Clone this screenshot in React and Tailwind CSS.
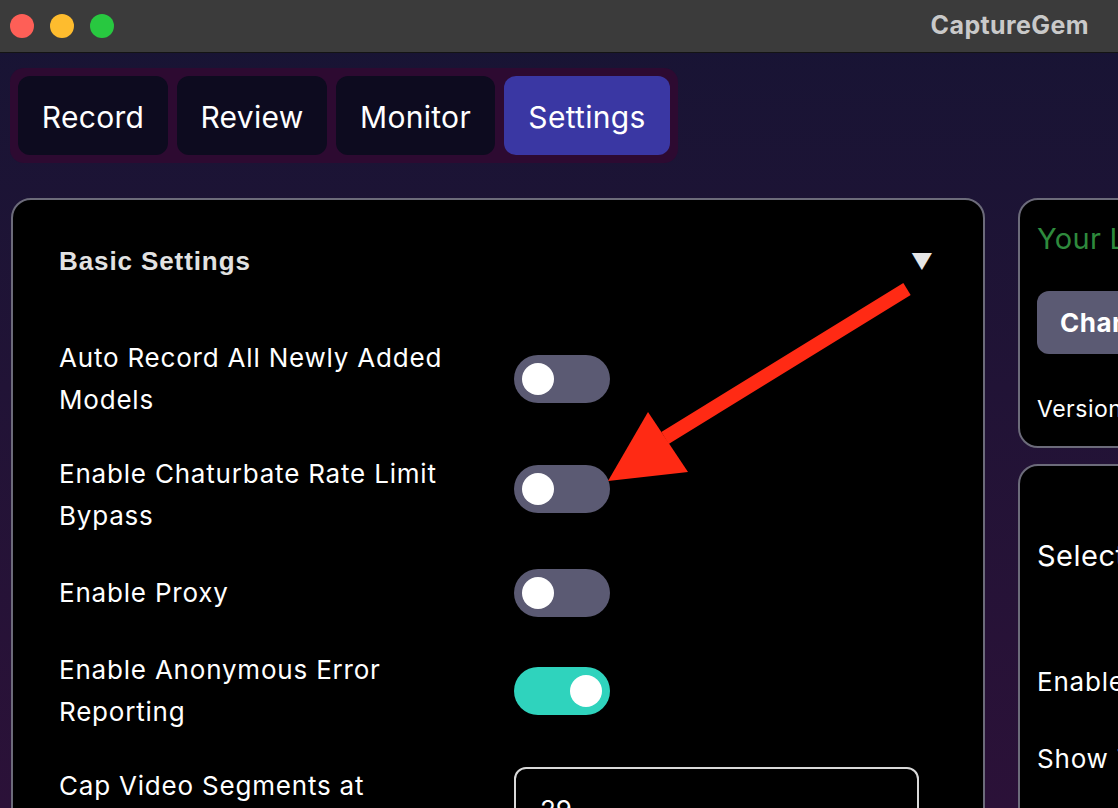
import { useState } from "react";

function Toggle({ on, className = "" }) {
  return (
    <div
      className={`w-[96px] h-[48px] rounded-full flex items-center px-[8px] shrink-0 ${
        on ? "bg-[#2fd3bd] justify-end" : "bg-[#5b5a73] justify-start"
      } ${className}`}
    >
      <div className="w-[32px] h-[32px] rounded-full bg-white" />
    </div>
  );
}

function Row({ label, children }) {
  return (
    <div className="flex items-center">
      <div className="w-[455px] pr-[8px] text-[26px] leading-[42px] tracking-[0.8px] text-white">{label}</div>
      {children}
    </div>
  );
}

export default function App() {
  const [tab] = useState("Settings");
  const tabs = [
    { label: "Record", w: "w-[150px]" },
    { label: "Review", w: "w-[150px]" },
    { label: "Monitor", w: "w-[159px]" },
    { label: "Settings", w: "w-[166px]" },
  ];

  return (
    <div
      className="relative w-[1118px] h-[808px] overflow-hidden flex flex-col bg-gradient-to-b from-[#171434] to-[#2b1138]"
      style={{ fontFamily: "Inter, 'Noto Sans', sans-serif" }}
    >
      {/* Title bar */}
      <div className="h-[53px] shrink-0 bg-[#3b3b3b] border-b border-[#141414] flex items-center px-[10px]">
        <div className="flex gap-[16px]">
          <span className="w-[24px] h-[24px] rounded-full bg-[#fe5f57]" />
          <span className="w-[24px] h-[24px] rounded-full bg-[#febc2e]" />
          <span className="w-[24px] h-[24px] rounded-full bg-[#28c840]" />
        </div>
        <div className="ml-auto mr-[19px] text-[25px] tracking-[0.4px] font-bold text-[#c9c9c9]">CaptureGem</div>
      </div>

      {/* Tabs */}
      <div className="px-[10px] pt-[15px] shrink-0">
        <div className="inline-flex gap-[9px] p-[8px] rounded-[14px] bg-[#2d0a31]">
          {tabs.map((t) => (
            <div
              key={t.label}
              className={`${t.w} h-[79px] rounded-[12px] flex items-center justify-center pt-[4px] text-[30px] tracking-[0.3px] text-white ${
                tab === t.label ? "bg-[#3a37a3]" : "bg-[#0d0b1f]"
              }`}
            >
              {t.label}
            </div>
          ))}
        </div>
      </div>

      {/* Panels */}
      <div className="flex gap-[33px] pl-[11px] pt-[35px] flex-1">
        <div className="w-[974px] shrink-0 h-[700px] rounded-[20px] border-2 border-[#6c6b7a] bg-black pl-[46px] pr-[50px]">
          <div className="flex items-center justify-between h-[124px] pb-[2px]">
            <span
              className="text-[26px] tracking-[0.9px] font-bold text-[#e2e2e2]"
              style={{ fontFamily: "'Liberation Sans', Arial, sans-serif" }}
            >
              Basic Settings
            </span>
            <span className="text-[#e6e6e6] text-[22px]">▼</span>
          </div>
          <div className="flex flex-col gap-[32px] pt-[13px]">
            <Row label={<>Auto Record All Newly Added<br />Models</>}>
              <Toggle on={false} />
            </Row>
            <Row label={<>Enable Chaturbate Rate Limit<br />Bypass</>}>
              <Toggle on={false} className="-mt-[12px]" />
            </Row>
            <Row label="Enable Proxy">
              <Toggle on={false} />
            </Row>
            <Row label={<>Enable Anonymous Error<br />Reporting</>}>
              <Toggle on={true} />
            </Row>
            <div className="flex items-start">
              <div className="w-[455px] pr-[8px] text-[26px] leading-[42px] tracking-[0.8px] text-white">
                Cap Video Segments at<br />Length (minutes)
              </div>
              <div className="w-[405px] h-[84px] mt-[2px] rounded-[12px] border-2 border-[#d9d9d9] bg-black px-[24px] flex items-center text-[26px] text-white">
                29
              </div>
            </div>
          </div>
        </div>

        <div className="w-[300px] shrink-0 flex flex-col gap-[16px]">
          <div className="h-[250px] rounded-[20px] border-2 border-[#6c6b7a] bg-black pl-[17px] pt-[17px]">
            <div className="text-[29px] tracking-[0.3px] text-[#2e8a3d] whitespace-nowrap">Your License</div>
            <div className="mt-[30px] w-[260px] h-[63px] rounded-[12px] bg-[#5b5a73] flex items-center px-[23px] text-[26px] tracking-[0.5px] font-bold text-white whitespace-nowrap">
              Change License
            </div>
            <div className="mt-[38px] text-[23px] tracking-[0.5px] text-white whitespace-nowrap">Version 1.0.0</div>
          </div>
          <div className="h-[400px] rounded-[20px] border-2 border-[#6c6b7a] bg-black pl-[17px] pt-[68px]">
            <div className="text-[29px] tracking-[0.5px] text-white whitespace-nowrap">Select Folder</div>
            <div className="mt-[84px] text-[26px] tracking-[0.8px] text-white whitespace-nowrap">Enable Notifications</div>
            <div className="mt-[38px] text-[26px] tracking-[0.8px] text-white whitespace-nowrap">Show Tray Icon</div>
          </div>
        </div>
      </div>

      {/* Annotation arrow */}
      <svg className="absolute left-0 top-0 pointer-events-none" width="1118" height="808">
        <line x1="907" y1="289" x2="665" y2="438" stroke="#ff2a14" strokeWidth="14" />
        <polygon points="608,481 648,412 688,472" fill="#ff2a14" />
      </svg>
    </div>
  );
}
